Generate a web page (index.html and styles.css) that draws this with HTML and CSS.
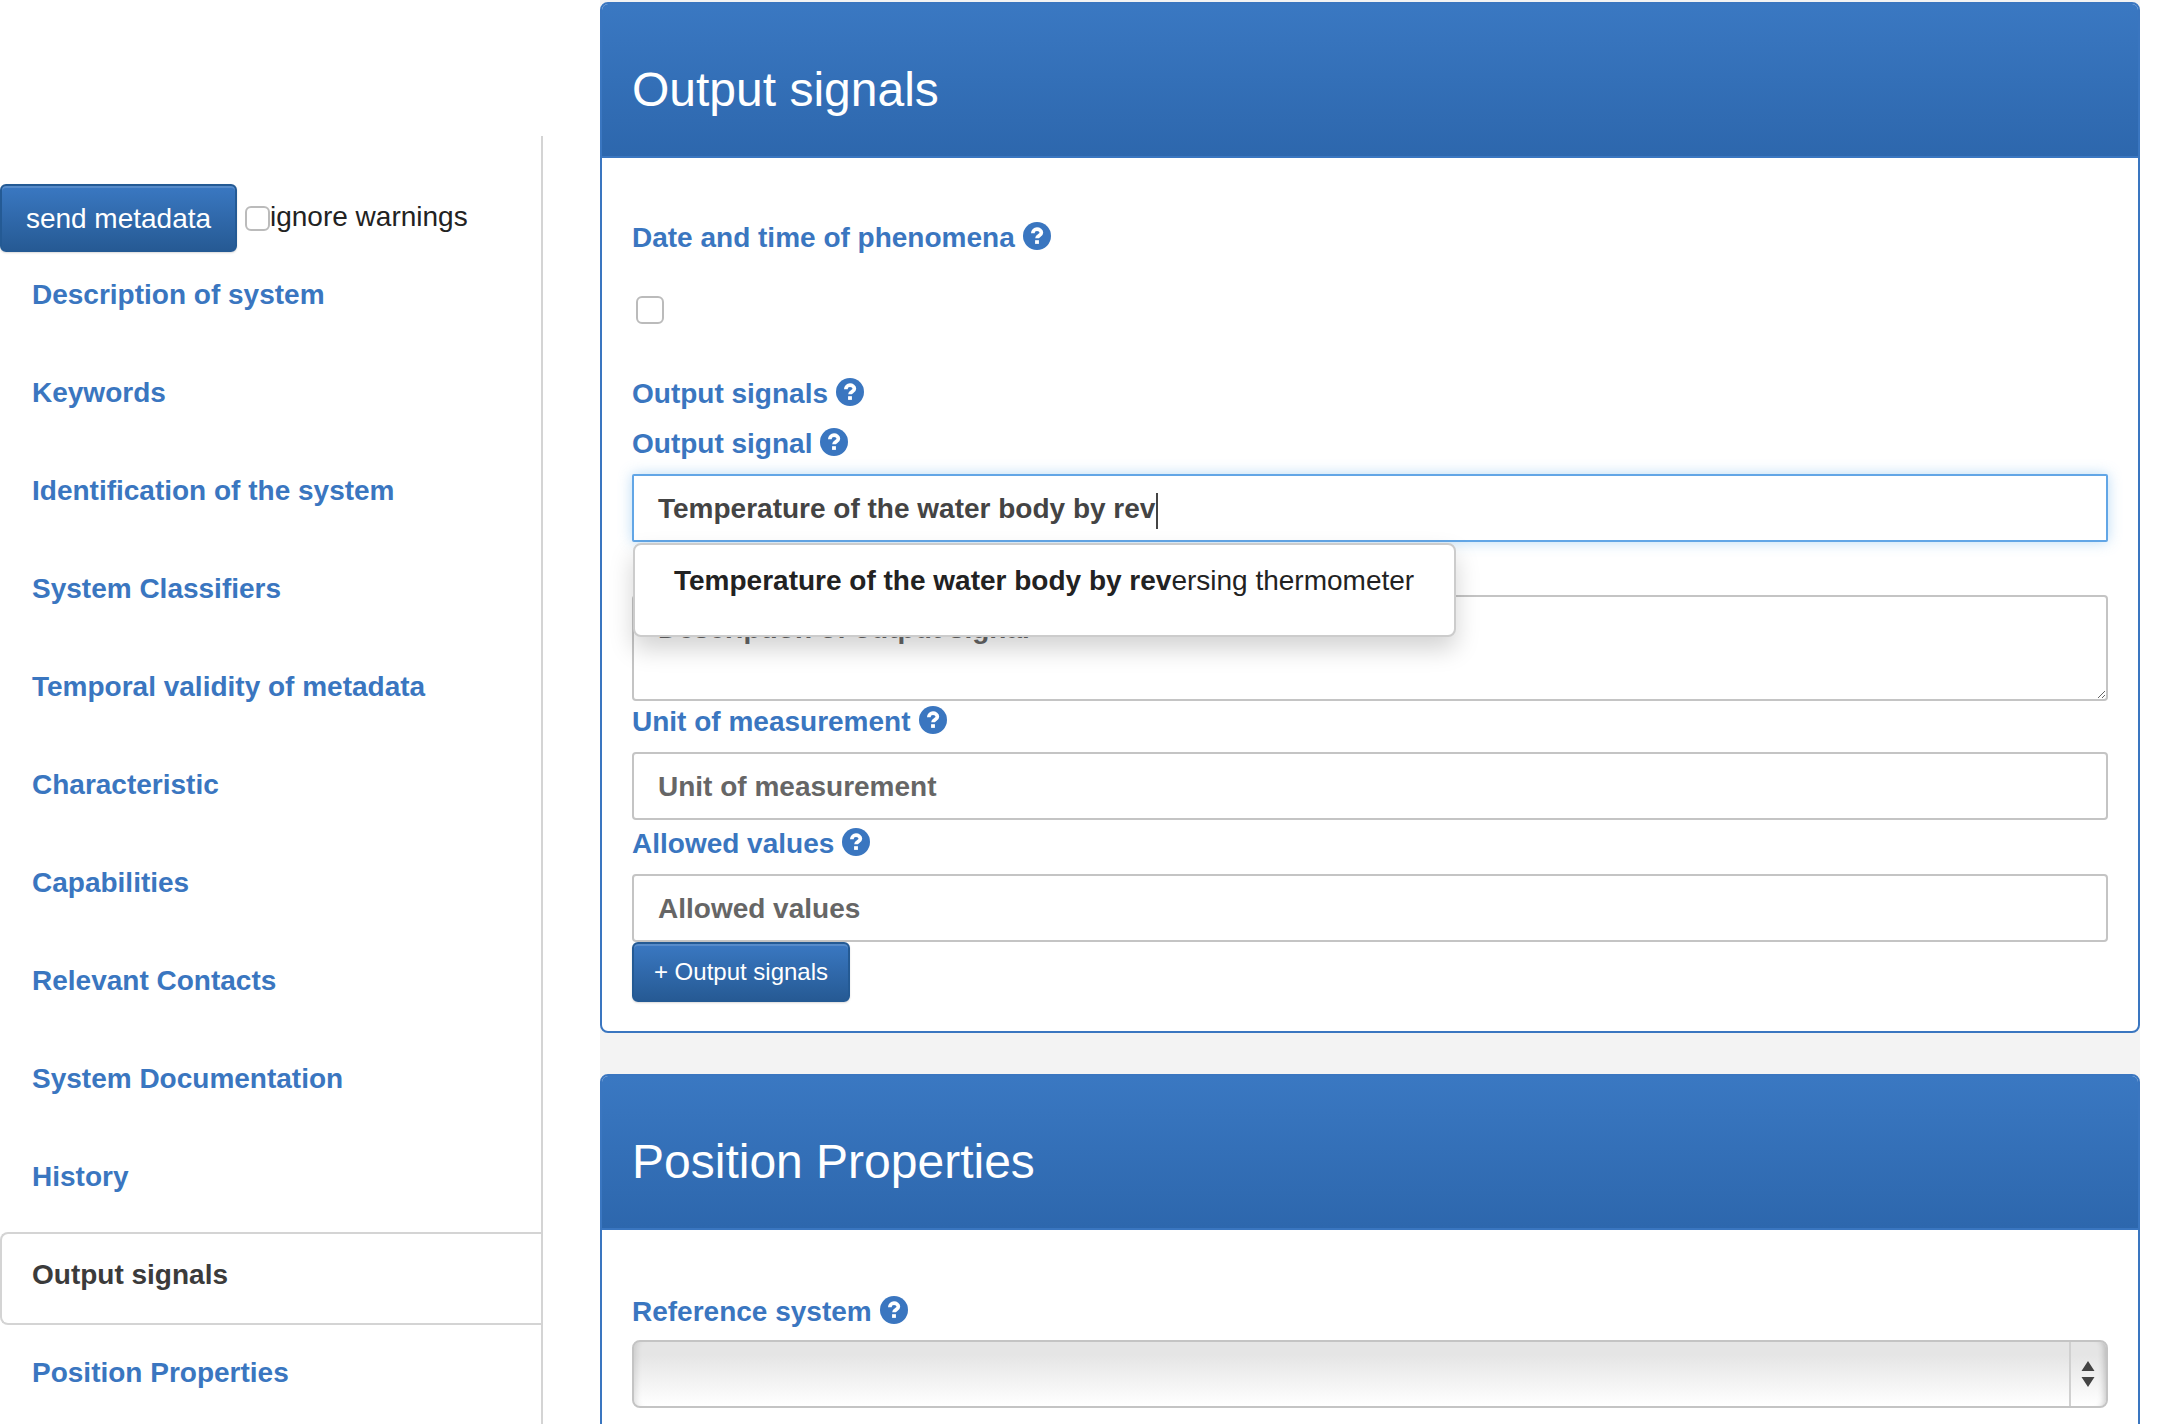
FILE: index.html
```html
<!DOCTYPE html>
<html lang="en">
<head>
    <meta charset="UTF-8">
    <title>Metadata editor</title>
    <link rel="stylesheet" href="styles.css">
</head>
<body>
    <svg class="defs" width="0" height="0">
        <symbol id="help" viewBox="0 0 16 16">
            <circle cx="8" cy="8" r="8" fill="#3a76c0"/>
            <path d="M5.6 6.4C5.6 5 6.7 4.1 8 4.1s2.5.8 2.5 2c0 1.7-2.5 1.6-2.5 3.2" fill="none" stroke="#fff" stroke-width="2.1"/>
            <rect x="6.9" y="10.4" width="2.2" height="2.1" fill="#fff"/>
        </symbol>
    </svg>

    <div class="page">
        <aside class="sidebar">
            <div class="send-row">
                <button class="btn btn-send">send metadata</button>
                <label class="ignore"><input type="checkbox" class="check-small">ignore warnings</label>
            </div>
            <ul class="nav">
                <li><a href="#">Description of system</a></li>
                <li><a href="#">Keywords</a></li>
                <li><a href="#">Identification of the system</a></li>
                <li><a href="#">System Classifiers</a></li>
                <li><a href="#">Temporal validity of metadata</a></li>
                <li><a href="#">Characteristic</a></li>
                <li><a href="#">Capabilities</a></li>
                <li><a href="#">Relevant Contacts</a></li>
                <li><a href="#">System Documentation</a></li>
                <li><a href="#">History</a></li>
                <li class="active"><a href="#">Output signals</a></li>
                <li><a href="#">Position Properties</a></li>
            </ul>
        </aside>

        <main class="main">
            <section class="panel">
                <h2 class="panel-title">Output signals</h2>
                <div class="panel-body">
                    <div class="lbl lbl-date">Date and time of phenomena <svg class="help"><use href="#help"/></svg></div>
                    <input type="checkbox" class="check">
                    <div class="lbl lbl-signals">Output signals <svg class="help"><use href="#help"/></svg></div>
                    <div class="lbl lbl-signal">Output signal <svg class="help"><use href="#help"/></svg></div>

                    <div class="typeahead">
                        <div class="field field-focus">Temperature of the water body by rev<span class="caret"></span></div>
                        <div class="menu"><b>Temperature of the water body by rev</b>ersing thermometer</div>
                    </div>
                    <textarea class="field area" placeholder="Description of output signal"></textarea>

                    <div class="lbl lbl-unit">Unit of measurement <svg class="help"><use href="#help"/></svg></div>
                    <input class="field" placeholder="Unit of measurement">
                    <div class="lbl lbl-allowed">Allowed values <svg class="help"><use href="#help"/></svg></div>
                    <input class="field" placeholder="Allowed values">
                    <button class="btn btn-add">+ Output signals</button>
                </div>
            </section>

            <section class="panel panel-last">
                <h2 class="panel-title">Position Properties</h2>
                <div class="panel-body">
                    <div class="lbl lbl-ref">Reference system <svg class="help"><use href="#help"/></svg></div>
                    <div class="select">
                        <div class="select-value"></div>
                        <div class="select-arrows">
                            <svg width="14" height="26" viewBox="0 0 14 26"><path d="M7 0l6.5 10H.5zM7 26L.5 16h13z" fill="#444"/></svg>
                        </div>
                    </div>
                </div>
            </section>
        </main>
    </div>
</body>
</html>
```

FILE: styles.css
```css
*{
    margin: 0;
    padding: 0;
    box-sizing: border-box;
}
html, body{
    height: 1424px;
    overflow: hidden;
    background: #fff;
}
body{
    font: 28px/40px "Liberation Sans", Arial, sans-serif;
    color: #222;
}
.defs{
    display: block;
    height: 0;
}
.page{
    display: flex;
    gap: 57px;
    width: 2140px;
    height: 1424px;
    overflow: hidden;
}

/* sidebar */
.sidebar{
    width: 543px;
    flex: none;
    margin-top: 136px;
    border-right: 2px solid #d4d4d4;
}
.send-row{
    display: flex;
    align-items: center;
    gap: 8px;
    padding-top: 48px;
}
.btn{
    display: block;
    font-family: inherit;
    color: #fff;
    border: 2px solid #245a94;
    border-radius: 6px;
    background: linear-gradient(#3a78c2, #265a94);
    box-shadow: inset 0 2px 0 rgba(255,255,255,.15), 0 1px 2px rgba(0,0,0,.15);
}
.btn-send{
    width: 237px;
    height: 68px;
    padding-top: 2px;
    font-size: 28px;
}
.ignore{
    display: flex;
    align-items: center;
    font-size: 28px;
    margin-top: -2px;
}
.check-small, .check{
    appearance: none;
    display: block;
    background: #fff;
    border: 2px solid #bbb;
    border-radius: 6px;
}
.check-small{
    width: 25px;
    height: 25px;
    margin-top: 3px;
}
.nav{
    list-style: none;
    display: flex;
    flex-direction: column;
    gap: 5px;
}
.nav a{
    display: block;
    padding: 21px 30px 28px;
    border: 2px solid transparent;
    border-right: 0;
    font-weight: bold;
    color: #3a76c0;
    text-decoration: none;
}
.nav .active a{
    color: #3b3b3b;
    border-color: #d4d4d4;
    border-radius: 8px 0 0 8px;
}

/* panels */
.main{
    width: 1540px;
    flex: none;
    padding-top: 2px;
    background: #f3f3f3;
}
.panel{
    background: #fff;
    border: 2px solid #3a76c0;
    border-radius: 8px;
    margin-bottom: 41px;
}
.panel-last{
    padding-bottom: 60px;
}
.panel-title{
    height: 154px;
    padding: 58px 30px 0;
    font-size: 48px;
    line-height: 56px;
    font-weight: normal;
    color: #fff;
    border-radius: 6px 6px 0 0;
    border-bottom: 2px solid #3a76c0;
    background: linear-gradient(#3a78c2, #2d67ad);
}
.panel-body{
    padding: 60px 30px 29px;
}
.panel-last .panel-body{
    padding-top: 62px;
}
.lbl{
    display: flex;
    align-items: center;
    gap: 8px;
    font-weight: bold;
    color: #3a76c0;
}
.help{
    width: 28px;
    height: 28px;
    margin-top: -4px;
}
.lbl-signals{ margin-top: 50px; }
.lbl-signal{ margin-top: 10px; }
.lbl-unit{ margin-top: 1px; }
.lbl-allowed{ margin-top: 4px; }
.check{
    width: 28px;
    height: 28px;
    margin: 38px 0 0 4px;
}

/* form fields */
.field{
    display: block;
    width: 100%;
    height: 68px;
    padding: 1px 24px 0;
    font: bold 28px/64px "Liberation Sans", Arial, sans-serif;
    color: #444;
    background: #fff;
    border: 2px solid #c4c4c4;
    border-radius: 4px;
    margin-top: 10px;
    outline: none;
}
.field::placeholder{
    color: #666;
    opacity: 1;
}
.field-focus{
    border-color: #62a6e6;
    border-radius: 2px;
    box-shadow: 0 0 14px rgba(102,175,233,.45);
}
.caret{
    display: inline-block;
    width: 2px;
    height: 36px;
    margin-left: 1px;
    vertical-align: middle;
    background: #444;
}
.area{
    height: 106px;
    margin-top: 53px;
    padding: 12px 24px;
    line-height: 40px;
    resize: vertical;
}
.typeahead{
    position: relative;
}
.menu{
    position: absolute;
    top: 69px;
    left: 1px;
    width: 823px;
    height: 94px;
    padding: 16px 39px 0;
    background: #fff;
    color: #222;
    border: 2px solid #ccc;
    border-radius: 8px;
    box-shadow: 0 12px 24px rgba(0,0,0,.175);
    white-space: nowrap;
    z-index: 2;
}
.btn-add{
    width: 218px;
    height: 60px;
    font-size: 24px;
}

/* select */
.select{
    display: flex;
    height: 68px;
    margin-top: 8px;
    border: 2px solid #c4c4c4;
    border-radius: 8px;
    background: linear-gradient(#e5e5e5 20%, #fff);
    box-shadow: inset 8px 0 6px -6px rgba(0,0,0,.12), inset -8px 0 6px -6px rgba(0,0,0,.2);
}
.select-value{
    flex: 1;
}
.select-arrows{
    width: 37px;
    padding-right: 2px;
    display: flex;
    align-items: center;
    justify-content: center;
    border-left: 2px solid #d0d0d0;
}
```
